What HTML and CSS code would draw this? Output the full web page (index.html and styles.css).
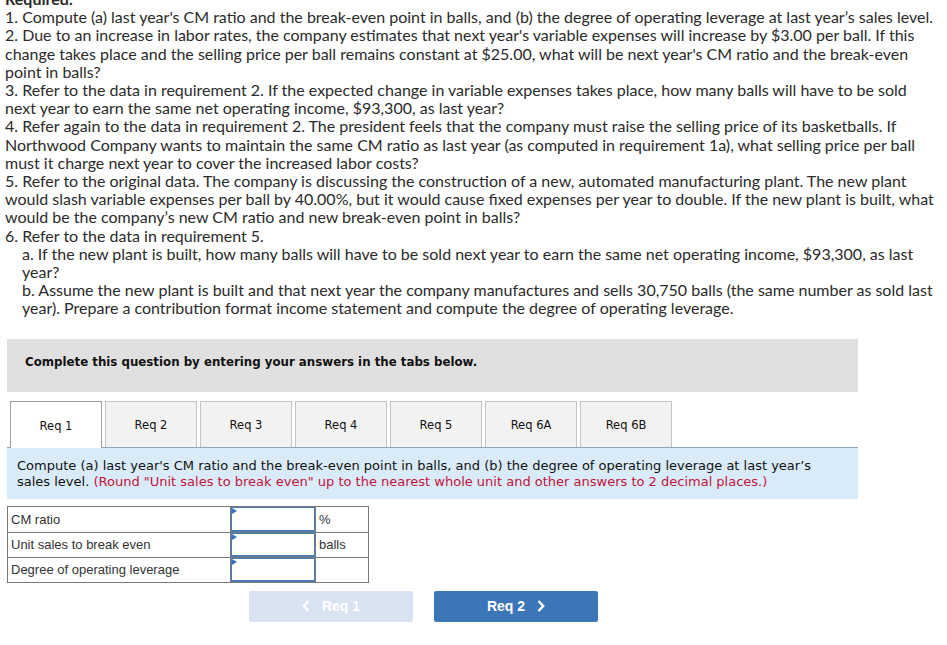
FILE: index.html
```html
<!DOCTYPE html>
<html>
<head>
<meta charset="utf-8">
<link rel="stylesheet" href="styles.css">
</head>
<body>
<div class="page">
  <div class="req">
    <div class="req-title">Required:</div>
    <div>1. Compute (a) last year's CM ratio and the break-even point in balls, and (b) the degree of operating leverage at last year’s sales level.</div>
    <div>2. Due to an increase in labor rates, the company estimates that next year's variable expenses will increase by $3.00 per ball. If this change takes place and the selling price per ball remains constant at $25.00, what will be next year's CM ratio and the break-even point in balls?</div>
    <div>3. Refer to the data in requirement 2. If the expected change in variable expenses takes place, how many balls will have to be sold next year to earn the same net operating income, $93,300, as last year?</div>
    <div>4. Refer again to the data in requirement 2. The president feels that the company must raise the selling price of its basketballs. If Northwood Company wants to maintain the same CM ratio as last year (as computed in requirement 1a), what selling price per ball must it charge next year to cover the increased labor costs?</div>
    <div>5. Refer to the original data. The company is discussing the construction of a new, automated manufacturing plant. The new plant would slash variable expenses per ball by 40.00%, but it would cause fixed expenses per year to double. If the new plant is built, what would be the company’s new CM ratio and new break-even point in balls?</div>
    <div>6. Refer to the data in requirement 5.</div>
    <div class="sub">a. If the new plant is built, how many balls will have to be sold next year to earn the same net operating income, $93,300, as last year?</div>
    <div class="sub">b. Assume the new plant is built and that next year the company manufactures and sells 30,750 balls (the same number as sold last year). Prepare a contribution format income statement and compute the degree of operating leverage.</div>
  </div>

  <div class="panel">
    <div class="notice">Complete this question by entering your answers in the tabs below.</div>

    <div class="tabs">
      <div class="tab active">Req 1</div>
      <div class="tab">Req 2</div>
      <div class="tab">Req 3</div>
      <div class="tab">Req 4</div>
      <div class="tab">Req 5</div>
      <div class="tab">Req 6A</div>
      <div class="tab">Req 6B</div>
    </div>

    <div class="instr">Compute (a) last year's CM ratio and the break-even point in balls, and (b) the degree of operating leverage at last year’s sales level. <span class="red">(Round "Unit sales to break even" up to the nearest whole unit and other answers to 2 decimal places.)</span></div>

    <table class="answers">
      <tr class="first">
        <td class="label">CM ratio</td>
        <td class="inp"><div class="field"></div></td>
        <td class="unit">%</td>
      </tr>
      <tr>
        <td class="label">Unit sales to break even</td>
        <td class="inp"><div class="field"></div></td>
        <td class="unit">balls</td>
      </tr>
      <tr>
        <td class="label">Degree of operating leverage</td>
        <td class="inp"><div class="field"></div></td>
        <td class="unit"></td>
      </tr>
    </table>

    <div class="nav">
      <div class="btn prev"><svg class="chev" width="8" height="12" viewBox="0 0 8 12"><polyline points="6.5,1 1.8,6 6.5,11" fill="none" stroke="#fff" stroke-width="2.4"/></svg><span>Req 1</span></div>
      <div class="btn next"><span>Req 2</span><svg class="chev" width="8" height="12" viewBox="0 0 8 12"><polyline points="1.5,1 6.2,6 1.5,11" fill="none" stroke="#fff" stroke-width="2.4"/></svg></div>
    </div>
  </div>
</div>
</body>
</html>
```
FILE: styles.css
```css
html, body {
  margin: 0;
  padding: 0;
  background: #fff;
}
.page {
  padding: 0 6px 0 5px;
  margin-top: -10px;
}
.req {
  font-family: "Lato", "Open Sans", sans-serif;
  font-size: 16px;
  line-height: 18.2px;
  color: #2b2b2b;
}
.req-title {
  font-weight: bold;
}
.sub {
  padding-left: 17px;
}
.panel {
  margin-top: 21px;
  padding-left: 2px;
  width: 851px;
}
.notice {
  background: #e0e0e0;
  height: 53px;
  box-sizing: border-box;
  padding-bottom: 6px;
  display: flex;
  align-items: center;
  padding-left: 18px;
  font-family: "DejaVu Sans", Verdana, sans-serif;
  font-weight: bold;
  font-size: 11.8px;
  color: #111;
}
.tabs {
  margin-top: 8px;
  display: flex;
  gap: 3px;
  padding-left: 3px;
  border-bottom: 1px solid #8ca6c0;
  height: 47px;
  align-items: flex-end;
}
.tab {
  width: 92px;
  height: 46px;
  box-sizing: border-box;
  padding-top: 2px;
  background: #f2f2f2;
  border: 1px solid #c4c4c4;
  border-bottom: none;
  display: flex;
  align-items: center;
  justify-content: center;
  font-family: "DejaVu Sans", Verdana, sans-serif;
  font-size: 11.5px;
  color: #111;
}
.tab.active {
  background: #fff;
  border-color: #a0a0a0;
  height: 47px;
  margin-bottom: -1px;
}
.instr {
  background: #d9ebf8;
  padding: 10px 10px 9px 10px;
  font-family: "DejaVu Sans", Verdana, sans-serif;
  font-size: 13px;
  line-height: 16px;
  color: #111;
}
.red {
  color: #c0143c;
}
.answers {
  margin-top: 7px;
  border-collapse: collapse;
  font-family: "Liberation Sans", Arial, sans-serif;
  font-size: 13px;
  color: #333;
}
.answers td {
  border: 1px solid #7a7a7a;
  height: 24px;
  padding: 0;
}
.answers tr.first td {
  height: 25px;
}
.answers td.label {
  width: 219px;
  padding-left: 3px;
}
.answers td.inp {
  width: 84px;
  position: relative;
}
.field {
  position: absolute;
  inset: 0;
  border: 1px solid #4a7ab0;
  border-bottom-width: 2px;
}
.field::before {
  content: "";
  position: absolute;
  left: 0;
  top: 0;
  border-left: 5px solid #3a74bf;
  border-top: 3px solid transparent;
  border-bottom: 3px solid transparent;
}
.answers td.unit {
  width: 49px;
  padding-left: 3px;
}
.nav {
  margin-top: 8px;
  display: flex;
  gap: 21px;
  padding-left: 242px;
}
.btn {
  width: 164px;
  height: 31px;
  border-radius: 2px;
  display: flex;
  align-items: center;
  justify-content: center;
  gap: 12px;
  font-family: "Liberation Sans", Arial, sans-serif;
  font-weight: bold;
  font-size: 14px;
  color: #fff;
}
.btn.prev {
  background: #d9e3f1;
}
.btn.next {
  background: #3a76b8;
}
.chev {
  display: block;
}
```
